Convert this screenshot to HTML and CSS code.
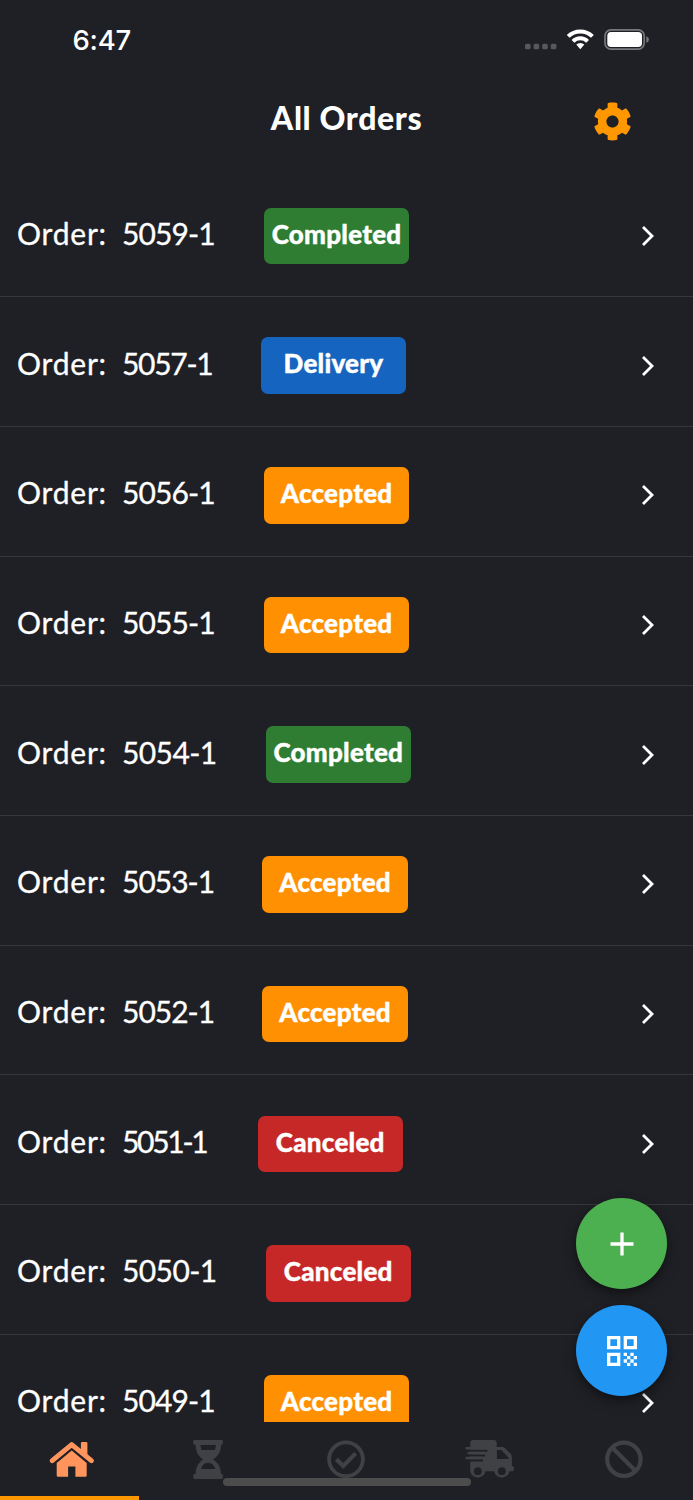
FILE: index.html
```
<!DOCTYPE html>
<html lang="en">
<head>
<meta charset="utf-8">
<title>All Orders</title>
<link rel="stylesheet" href="styles.css">
</head>
<body>
<svg width="0" height="0" class="sprite">
  <symbol id="chevron" viewBox="0 0 14 22"><path d="M2 2L11 11L2 20" fill="none" stroke="#fff" stroke-width="2.8"/></symbol>
</svg>
<div class="screen">
  <div class="status">
    <span class="time">6:47</span>
    <svg class="signals" width="128" height="26" viewBox="522 26 128 26">
      <g fill="#57585c"><rect x="525" y="43.7" width="5.6" height="5.6" rx="1.6"/><rect x="533.6" y="43.7" width="5.6" height="5.6" rx="1.6"/><rect x="542.2" y="43.7" width="5.6" height="5.6" rx="1.6"/><rect x="550.8" y="43.7" width="5.6" height="5.6" rx="1.6"/></g>
      <g fill="none" stroke="#fff" stroke-width="4"><path d="M568.2 36.4A17.2 17.2 0 0 1 592.4 36.4"/><path d="M573 41.3A10.4 10.4 0 0 1 587.6 41.3"/></g>
      <path d="M576.3 44.6A5.8 5.8 0 0 1 584.3 44.6L580.3 49.2Z" fill="#fff"/>
      <rect x="605" y="29.8" width="39.2" height="19.4" rx="6" fill="none" stroke="#77787c" stroke-width="1.7"/>
      <rect x="607.3" y="32" width="34.7" height="15" rx="3.8" fill="#fff"/>
      <path d="M646.3 36.2Q648.9 37 648.9 39.5T646.3 42.8Z" fill="#77787c"/>
    </svg>
  </div>
  <header class="header">
    <h1 class="title">All Orders</h1>
    <svg class="gear" width="39" height="39" viewBox="0 0 512 512"><path fill="#ff9800" d="M487.4 315.7l-42.6-24.6c4.3-23.2 4.3-47 0-70.2l42.6-24.6c4.9-2.8 7.1-8.6 5.5-14-11.1-35.6-30-67.8-54.7-94.6-3.8-4.1-10-5.1-14.8-2.3L380.8 110c-17.9-15.4-38.5-27.3-60.8-35.1V25.8c0-5.6-3.9-10.5-9.4-11.7-36.7-8.2-74.3-7.8-109.2 0-5.5 1.2-9.4 6.1-9.4 11.7V75c-22.2 7.9-42.8 19.8-60.8 35.1L88.7 85.5c-4.9-2.8-11-1.9-14.8 2.3-24.7 26.7-43.6 58.9-54.7 94.6-1.7 5.4.6 11.2 5.5 14L67.3 221c-4.3 23.2-4.3 47 0 70.2l-42.6 24.6c-4.9 2.8-7.1 8.6-5.5 14 11.1 35.6 30 67.8 54.7 94.6 3.8 4.1 10 5.1 14.8 2.3l42.6-24.6c17.9 15.4 38.5 27.3 60.8 35.1v49.2c0 5.6 3.9 10.5 9.4 11.7 36.7 8.2 74.3 7.8 109.2 0 5.5-1.2 9.4-6.1 9.4-11.7v-49.2c22.2-7.9 42.8-19.8 60.8-35.1l42.6 24.6c4.9 2.8 11 1.9 14.8-2.3 24.7-26.7 43.6-58.9 54.7-94.6 1.5-5.5-.7-11.3-5.6-14.1zM256 336c-44.1 0-80-35.9-80-80s35.9-80 80-80 80 35.9 80 80-35.9 80-80 80z"/></svg>
  </header>
  <main class="list">
    <div class="row"><span class="label">Order:</span><span class="num w3">5059-1</span><span class="badge completed">Completed</span><svg class="chev"><use href="#chevron"/></svg></div>
    <div class="row"><span class="label">Order:</span><span class="num w1">5057-1</span><span class="badge delivery">Delivery</span><svg class="chev"><use href="#chevron"/></svg></div>
    <div class="row"><span class="label">Order:</span><span class="num w3">5056-1</span><span class="badge accepted">Accepted</span><svg class="chev"><use href="#chevron"/></svg></div>
    <div class="row"><span class="label">Order:</span><span class="num w3">5055-1</span><span class="badge accepted">Accepted</span><svg class="chev"><use href="#chevron"/></svg></div>
    <div class="row"><span class="label">Order:</span><span class="num w4">5054-1</span><span class="badge completed">Completed</span><svg class="chev"><use href="#chevron"/></svg></div>
    <div class="row"><span class="label">Order:</span><span class="num w2">5053-1</span><span class="badge accepted">Accepted</span><svg class="chev"><use href="#chevron"/></svg></div>
    <div class="row"><span class="label">Order:</span><span class="num w2">5052-1</span><span class="badge accepted">Accepted</span><svg class="chev"><use href="#chevron"/></svg></div>
    <div class="row"><span class="label">Order:</span><span class="num w0">5051-1</span><span class="badge canceled">Canceled</span><svg class="chev"><use href="#chevron"/></svg></div>
    <div class="row"><span class="label">Order:</span><span class="num w4">5050-1</span><span class="badge canceled">Canceled</span><svg class="chev"><use href="#chevron"/></svg></div>
    <div class="row"><span class="label">Order:</span><span class="num w3">5049-1</span><span class="badge accepted">Accepted</span><svg class="chev"><use href="#chevron"/></svg></div>
  </main>
  <nav class="tabs">
    <div class="tab active"><svg width="60" height="46" viewBox="39.3 1436 60 46" fill="#ff955c"><path d="M81.2 1443.2q0-1.2 1.2-1.2h4.1q1.2 0 1.2 1.2v12.2l-6.5-5.6z"/><path d="M52.5 1460.6L72 1444.6L91.7 1460.6" fill="none" stroke="#ff955c" stroke-width="5" stroke-linejoin="round" stroke-linecap="round"/><path d="M72 1450.6L87 1463V1475.5Q87 1476.8 85.7 1476.8H75.7V1466.6H68.4V1476.8H58.3Q57 1476.8 57 1475.5V1463Z"/></svg></div>
    <div class="tab"><svg width="60" height="46" viewBox="177.9 1436 60 46" fill="#404145"><rect x="193.2" y="1440" width="29.6" height="4.7" rx="1.4"/><rect x="193.2" y="1474" width="29.6" height="4.9" rx="1.4"/><path fill-rule="evenodd" d="M195.5 1444C195.5 1453 199 1457 203.2 1459.4C199 1462 195.5 1466 195.5 1475H221C221 1466 217 1462 212.8 1459.4C217 1457 221 1453 221 1444ZM200.4 1444.7H215.8Q215.8 1447.5 214.8 1449.9H201.4Q200.4 1447.5 200.4 1444.7ZM200.8 1469Q203 1462.8 208 1462.8T215.3 1469Z"/></svg></div>
    <div class="tab"><svg width="60" height="46" viewBox="316.5 1436 60 46" fill="none" stroke="#404145"><circle cx="346.5" cy="1459.3" r="16.9" stroke-width="3.8"/><path d="M336.9 1459.2L343.7 1466L356.1 1453.4" stroke-width="4.2"/></svg></div>
    <div class="tab"><svg width="60" height="46" viewBox="455.1 1436 60 46" fill="#404145"><path fill-rule="evenodd" d="M470.3 1447V1443.3Q470.3 1440 473.6 1440H493.6Q496.8 1440 496.8 1443.3V1447H502.5Q504 1447 505.2 1448.2L510.5 1453.6Q512 1455.1 512 1457V1466.2H513Q514 1466.2 514 1467.2V1470.1Q514 1471.2 513 1471.2H509.5A7.7 7.7 0 0 1 494.3 1471.2H485.5A7.7 7.7 0 0 1 470.3 1471.2ZM497 1449.9V1459H508.8V1457.8L501.4 1449.9Z"/><g fill="#1f2025"><circle cx="477.9" cy="1471.2" r="3.9"/><circle cx="501.9" cy="1471.2" r="3.9"/></g><path d="M469 1450.7H487.5M469 1455.5H485.3M469 1460.4H483" stroke="#1f2025" stroke-width="2.1"/><path d="M466.7 1448.3H486.5M468.7 1453.1H484.3M466.7 1458H481.8" stroke="#404145" stroke-width="2.5" stroke-linecap="round"/></svg></div>
    <div class="tab"><svg width="60" height="46" viewBox="593.7 1436 60 46" fill="none" stroke="#404145" stroke-width="4.2"><circle cx="623.6" cy="1459.3" r="16.7"/><path d="M611.8 1447.5L635.4 1471.1"/></svg></div>
  </nav>
  <div class="fabs">
    <button class="fab add"><svg width="24" height="24" viewBox="0 0 24 24"><path d="M12 .5V23.5M.5 12H23.5" stroke="#fff" stroke-width="3.3"/></svg></button>
    <button class="fab scan"><svg width="40" height="40" viewBox="0 0 24 24"><path fill="#fff" fill-rule="evenodd" d="M3 3h8v8H3zM5 5v4h4V5zM13 3h8v8h-8zM15 5v4h4V5zM3 13h8v8H3zM5 15v4h4v-4zM13 13h2v2h-2zM17 13h2v2h-2zM15 15h2v2h-2zM19 15h2v2h-2zM13 17h2v2h-2zM17 17h2v2h-2zM15 19h2v2h-2zM19 19h2v2h-2z"/></svg></button>
  </div>
  <div class="home-indicator"></div>
</div>
</body>
</html>
```
FILE: styles.css
```
* { box-sizing: border-box; }
body { margin: 0; background: #1f2025; color: #fff; font-family: Lato, "Open Sans", sans-serif; }
.sprite { position: absolute; }
.screen { position: relative; width: 693px; height: 1500px; overflow: hidden; display: flex; flex-direction: column; background: #1f2025; }
.status { height: 78px; padding: 26px 43px 0 72.5px; display: flex; justify-content: space-between; align-items: flex-start; flex: none; }
.time { font: 500 27.5px/29px Inter, sans-serif; letter-spacing: -0.2px; }
.header { height: 89.6px; flex: none; display: grid; grid-template-columns: 1fr auto 1fr; align-items: start; padding-top: 22px; }
.title { grid-column: 2; margin: 0; font-size: 32px; line-height: 36px; font-weight: 900; letter-spacing: 0.6px; white-space: nowrap; }
.gear { justify-self: end; margin: 2px 61.5px 0 0; }
.list { flex: none; height: 1254.4px; overflow: hidden; }
.row { height: 129.7px; display: flex; align-items: center; padding: 8px 38px 0 17px; border-bottom: 1.5px solid #36373b; font-size: 30px; }
.label { width: 105px; line-height: 36px; margin-top: -6px; letter-spacing: 0.8px; -webkit-text-stroke: 0.3px #fff; }
.num { line-height: 36px; margin-top: -6px; white-space: nowrap; -webkit-text-stroke: 0.3px #fff; }
.w0 { width: 135.5px; letter-spacing: -2.3px; }
.w1 { width: 138.7px; letter-spacing: -1.3px; }
.w2 { width: 140.3px; letter-spacing: -1px; }
.w3 { width: 141.8px; letter-spacing: -0.9px; }
.w4 { width: 143.5px; letter-spacing: -0.6px; }
.badge { width: 145.6px; height: 56.5px; border-radius: 7px; text-align: center; font-size: 26px; line-height: 53px; font-weight: 900; letter-spacing: 0.25px; -webkit-text-stroke: 0.4px #fff; }
.completed { background: #2f7d32; }
.delivery { background: #1565c0; }
.accepted { background: #ff9002; }
.canceled { background: #c62828; }
.chev { width: 14px; height: 22px; margin-left: auto; }
.tabs { display: grid; grid-template-columns: repeat(5, 1fr); height: 78px; flex: none; background: #1f2025; }
.tab { display: flex; justify-content: center; align-items: flex-start; padding-top: 14px; }
.active { border-bottom: 4px solid #ff9800; }
.fabs { position: absolute; right: 26px; top: 1198px; display: flex; flex-direction: column; gap: 16px; }
.fab { width: 91px; height: 91px; border: 0; border-radius: 50%; padding: 0; display: flex; align-items: center; justify-content: center; box-shadow: 0 6px 14px rgba(0,0,0,.3), 0 3px 5px rgba(0,0,0,.2); }
.add { background: #4caf50; }
.scan { background: #2196f3; }
.home-indicator { position: absolute; left: 223px; top: 1478.4px; width: 247.5px; height: 8px; border-radius: 4px; background: #4c4c4c; }
```
